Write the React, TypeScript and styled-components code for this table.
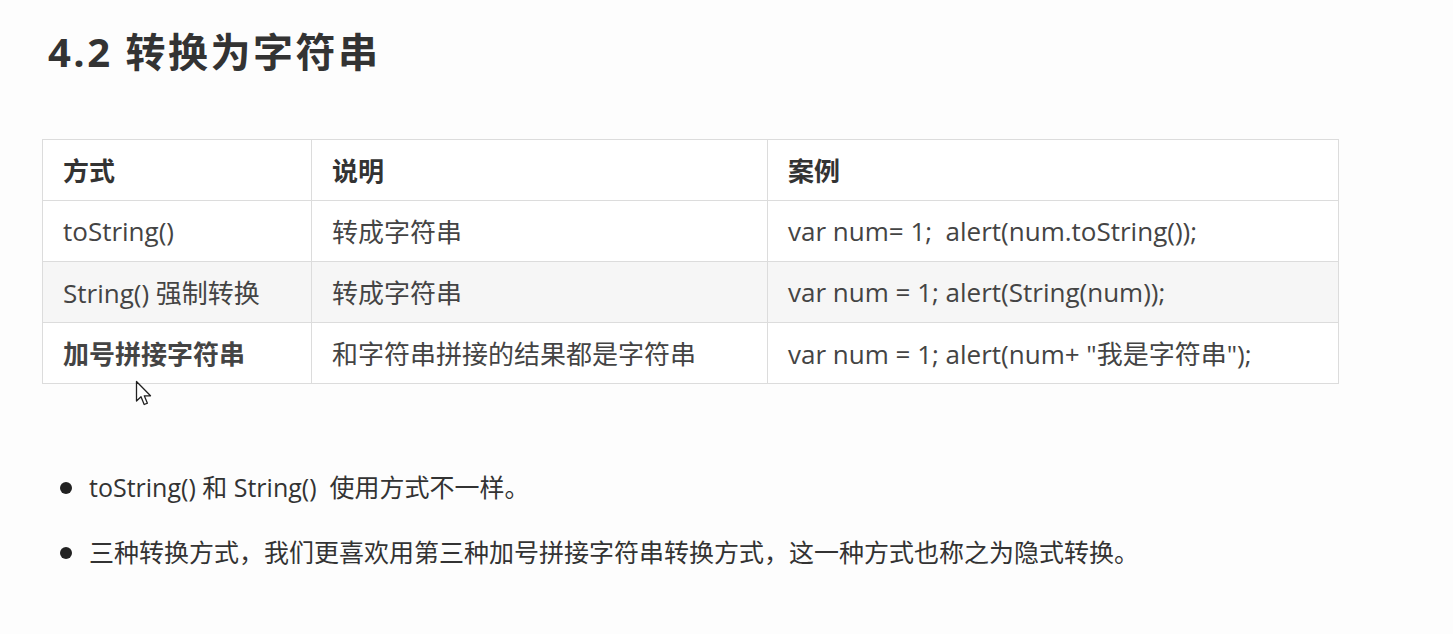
import React from 'react';
import styled, { createGlobalStyle } from 'styled-components';

const GlobalStyle = createGlobalStyle`
  html, body {
    margin: 0;
    padding: 0;
    background: #fdfdfd;
  }
  body {
    font-family: "Open Sans", "Noto Sans CJK SC", sans-serif;
    color: #333;
  }
`;

const Page = styled.div`
  position: relative;
  width: 1453px;
  height: 634px;
  padding: 26px 0 0 42px;
  box-sizing: border-box;
  overflow: hidden;
`;

const Title = styled.h2`
  margin: 0 0 0 6px;
  font-size: 40px;
  line-height: 52px;
  font-weight: 700;
  letter-spacing: 2.5px;
  color: #333;
`;

const Table = styled.table`
  margin-top: 61px;
  width: 1296px;
  border-collapse: collapse;
  table-layout: fixed;
  font-size: 26px;
`;

const Row = styled.tr<{ $shaded?: boolean }>`
  height: 61px;
  background: ${(p) => (p.$shaded ? '#f6f6f6' : '#fff')};
`;

const HeadCell = styled.th<{ $w: number }>`
  box-sizing: border-box;
  width: ${(p) => p.$w}px;
  padding: 0 20px;
  text-align: left;
  font-weight: 700;
  border: 1px solid #dcdcdc;
  color: #333;
`;

const Cell = styled.td<{ $bold?: boolean; $code?: boolean }>`
  box-sizing: border-box;
  padding: 0 20px;
  border: 1px solid #dcdcdc;
  font-weight: ${(p) => (p.$bold ? 700 : 400)};
  color: #444;
  white-space: ${(p) => (p.$code ? 'pre' : 'nowrap')};
`;

const List = styled.ul`
  list-style: none;
  margin: 86px 0 0 0;
  padding: 0;
  display: flex;
  flex-direction: column;
  gap: 30px;
`;

const Item = styled.li`
  display: flex;
  align-items: center;
  gap: 17px;
  font-size: 25px;
  line-height: 35px;
  color: #333;
  padding-left: 18px;
`;

const Dot = styled.span`
  width: 12px;
  height: 12px;
  border-radius: 50%;
  background: #222;
  flex: none;
`;

const Cursor = styled.svg`
  position: absolute;
  left: 135px;
  top: 380px;
`;

const rows = [
  { way: 'toString()', desc: '转成字符串', code: 'var num= 1;  alert(num.toString());' },
  { way: 'String() 强制转换', desc: '转成字符串', code: 'var num = 1; alert(String(num));', shaded: true },
  { way: '加号拼接字符串', desc: '和字符串拼接的结果都是字符串', code: 'var num = 1; alert(num+ "我是字符串");', bold: true },
];

export default function App() {
  return (
    <Page>
      <GlobalStyle />
      <Title>4.2 转换为字符串</Title>
      <Table>
        <thead>
          <Row>
            <HeadCell $w={269}>方式</HeadCell>
            <HeadCell $w={456}>说明</HeadCell>
            <HeadCell $w={571}>案例</HeadCell>
          </Row>
        </thead>
        <tbody>
          {rows.map((r) => (
            <Row key={r.way} $shaded={r.shaded}>
              <Cell $bold={r.bold}>{r.way}</Cell>
              <Cell>{r.desc}</Cell>
              <Cell $code>{r.code}</Cell>
            </Row>
          ))}
        </tbody>
      </Table>
      <List>
        <Item>
          <Dot />
          <span>toString() 和 String()&nbsp; 使用方式不一样。</span>
        </Item>
        <Item>
          <Dot />
          <span>三种转换方式，我们更喜欢用第三种加号拼接字符串转换方式，这一种方式也称之为隐式转换。</span>
        </Item>
      </List>
      <Cursor width="20" height="28" viewBox="0 0 20 28">
        <path d="M1.5 1.5 L1.5 21 L6 16.8 L9.2 24.5 L12.4 23.2 L9.3 15.8 L15.5 15.8 Z" fill="#fff" stroke="#222" strokeWidth="1.3" strokeLinejoin="round" />
      </Cursor>
    </Page>
  );
}
